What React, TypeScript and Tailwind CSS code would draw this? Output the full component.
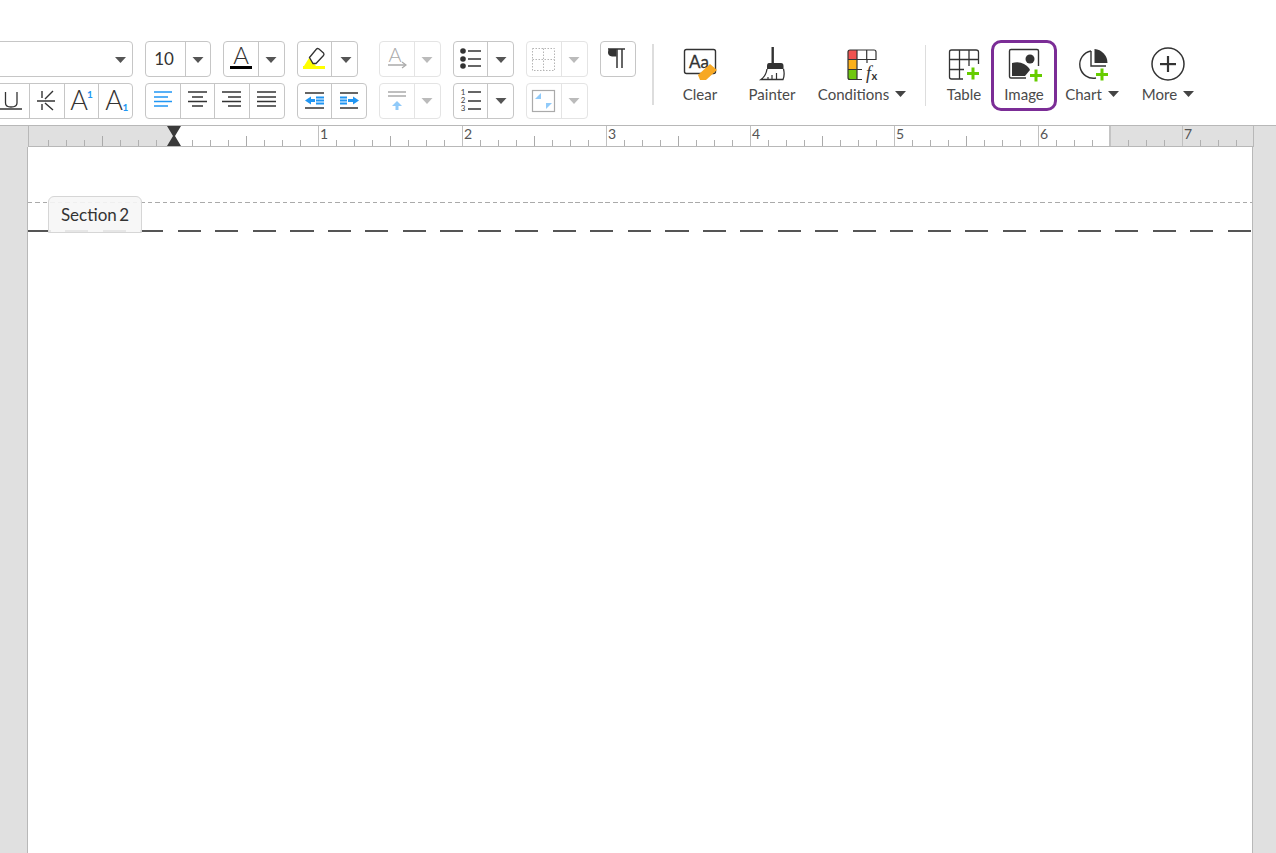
import React from "react";

const DARK = "#333333";
const BLUE = "#2196f3";
const GREEN = "#66cc00";

function Caret({ cx, cy, disabled }: { cx: number; cy: number; disabled?: boolean }) {
  return <polygon points={`${cx - 5.5},${cy - 3} ${cx + 5.5},${cy - 3} ${cx},${cy + 3}`} fill={disabled ? "#bbbbbb" : "#555555"} />;
}

function Group({ w, disabled, children }: { w: string; disabled?: boolean; children: React.ReactNode }) {
  return (
    <div className={`flex h-[36px] shrink-0 overflow-hidden rounded-[4px] border bg-white ${w} ${disabled ? "border-[#e4e4e4]" : "border-[#c6c6c6]"}`}>
      {children}
    </div>
  );
}

function Cell({ w, vb, div, disabled, children }: { w: string; vb: string; div?: boolean; disabled?: boolean; children?: React.ReactNode }) {
  return (
    <div className={`h-full shrink-0 ${w} ${div ? (disabled ? "border-l border-[#e4e4e4]" : "border-l border-[#c6c6c6]") : ""}`}>
      <svg className="block h-full w-full overflow-visible" viewBox={vb} preserveAspectRatio="xMinYMin meet">
        {children}
      </svg>
    </div>
  );
}

function L({ x1, x2, y, c = DARK, h = 1.6 }: { x1: number; x2: number; y: number; c?: string; h?: number }) {
  return <line x1={x1} x2={x2} y1={y} y2={y} stroke={c} strokeWidth={h} />;
}

function Plus({ cx, cy }: { cx: number; cy: number }) {
  return (
    <g fill={GREEN}>
      <rect x={cx - 6} y={cy - 1.5} width="12" height="3" />
      <rect x={cx - 1.5} y={cy - 6} width="3" height="12" />
    </g>
  );
}

function BigButton({ w, label, vb, caret, active, children, ml }: { w: string; label: string; vb: string; caret?: boolean; active?: boolean; ml: string; children: React.ReactNode }) {
  return (
    <div className={`flex h-[71px] shrink-0 flex-col items-center rounded-[10px] border-[3px] pt-[4px] ${w} ${ml} ${active ? "border-[#7b2d96]" : "border-transparent"}`}>
      <svg className="block h-[34px] w-[40px] shrink-0 overflow-visible" viewBox={vb}>
        {children}
      </svg>
      <div className="mt-[4px] flex h-[18px] items-center gap-[6px] whitespace-nowrap text-[15px] leading-[18px] text-[#4a4a4a]">
        <span>{label}</span>
        {caret && (
          <svg className="block h-[6px] w-[11px]" viewBox="0 0 11 6">
            <polygon points="0,0 11,0 5.5,6" fill="#444444" />
          </svg>
        )}
      </div>
    </div>
  );
}

function Toolbar() {
  return (
    <div className="flex h-[126px] w-full shrink-0 overflow-hidden border-b border-[#b8b8b8] bg-white pt-[41px]">
      <div className="ml-[-100px] flex shrink-0 flex-col gap-[6px]">
        <div className="flex items-start">
          <Group w="w-[233px]">
            <Cell w="w-[231px]" vb="-99 42 231 34">
              <Caret cx={120.5} cy={60} />
            </Cell>
          </Group>
          <div className="ml-[12px]">
            <Group w="w-[66px]">
              <div className="flex h-full w-[39px] shrink-0 items-center justify-center pr-[3px] text-[17px] text-[#333333]">10</div>
              <Cell w="w-[25px]" vb="186 42 24 34" div>
                <Caret cx={198} cy={60} />
              </Cell>
            </Group>
          </div>
          <div className="ml-[12px]">
            <Group w="w-[62px]">
              <Cell w="w-[34px]" vb="224 42 34 34">
                <text x="241" y="64" textAnchor="middle" fontSize="24" fontWeight="300" fill="#333333">A</text>
                <rect x="230" y="66" width="22" height="3" fill="#000" />
              </Cell>
              <Cell w="w-[26px]" vb="259 42 25 34" div>
                <Caret cx={271} cy={60} />
              </Cell>
            </Group>
          </div>
          <div className="ml-[12px]">
            <Group w="w-[61px]">
              <Cell w="w-[33px]" vb="298 42 33 34">
                <polygon points="304,66 309,58 316,66" fill="#ffff00" />
                <path d="M309.5 57.5 L316.5 49 Q317.5 48 319 49 L323.5 53 Q324.5 54.2 323.5 55.5 L316 63.5 L313 63.5 Z" fill="#fff" stroke="#333" strokeWidth="1.3" />
                <rect x="303" y="66" width="22" height="3" fill="#ffff00" />
              </Cell>
              <Cell w="w-[26px]" vb="332 42 25 34" div>
                <Caret cx={346} cy={60} />
              </Cell>
            </Group>
          </div>
          <div className="ml-[21px]">
            <Group w="w-[62px]" disabled>
              <Cell w="w-[34px]" vb="380 42 34 34">
                <text x="395" y="62" textAnchor="middle" fontSize="20" fontWeight="300" fill="#aaaaaa">A</text>
                <L x1={388} x2={405} y={65} c="#aaaaaa" />
                <path d="M402 62 L406 65 L402 68" fill="none" stroke="#aaaaaa" strokeWidth="1.2" />
              </Cell>
              <Cell w="w-[26px]" vb="415 42 25 34" div disabled>
                <Caret cx={427} cy={60} disabled />
              </Cell>
            </Group>
          </div>
          <div className="ml-[12px]">
            <Group w="w-[61px]">
              <Cell w="w-[33px]" vb="454 42 33 34">
                <circle cx="463" cy="51" r="2.8" fill={DARK} />
                <circle cx="463" cy="59" r="2.8" fill={DARK} />
                <circle cx="463" cy="66" r="2.8" fill={DARK} />
                <L x1={468} x2={481} y={51} />
                <L x1={468} x2={481} y={59} />
                <L x1={468} x2={481} y={66} />
              </Cell>
              <Cell w="w-[26px]" vb="488 42 25 34" div>
                <Caret cx={501} cy={60} />
              </Cell>
            </Group>
          </div>
          <div className="ml-[12px]">
            <Group w="w-[62px]" disabled>
              <Cell w="w-[34px]" vb="527 42 34 34">
                <g fill="none" stroke="#b5b5b5" strokeWidth="1" strokeDasharray="1.5 1.5">
                  <rect x="532.5" y="48.5" width="22" height="22" />
                  <path d="M543.5 48.5 V70.5 M532.5 59.5 H554.5" />
                </g>
              </Cell>
              <Cell w="w-[26px]" vb="562 42 25 34" div disabled>
                <Caret cx={574} cy={60} disabled />
              </Cell>
            </Group>
          </div>
          <div className="ml-[12px]">
            <Group w="w-[36px]">
              <Cell w="w-[34px]" vb="601 42 34 34">
                <path d="M616.5 49 H609.5 Q608 49 608 52.5 Q608 56 612 56.5 L616.5 56.5 Z" fill={DARK} />
                <path d="M608 49 H625" stroke={DARK} strokeWidth="1.4" />
                <path d="M617 49 V68 M622 49 V68" stroke={DARK} strokeWidth="1.5" />
              </Cell>
            </Group>
          </div>
        </div>
        <div className="flex items-start">
          <Group w="w-[233px]">
            <Cell w="w-[128px]" vb="-99 84 128 34">
              <path d="M5.5 92 V103 Q5.5 107 11 107 Q17 107 17 103 V92" fill="none" stroke="#333" strokeWidth="1.3" />
              <L x1={0} x2={22} y={109} h={1.3} />
            </Cell>
            <Cell w="w-[35px]" vb="30 84 34 34" div>
              <path d="M42 91 V98 M42 104 V110 M53 91 L45 99 M45 103 L53 110" fill="none" stroke="#333" strokeWidth="1.4" />
              <L x1={37} x2={55} y={101} h={1.4} />
            </Cell>
            <Cell w="w-[34px]" vb="64 84 33 34" div>
              <text x="78" y="110" textAnchor="middle" fontSize="27" fontWeight="300" fill="#333">A</text>
              <text x="89" y="98" textAnchor="middle" fontSize="10" fontWeight="700" fill={BLUE}>1</text>
            </Cell>
            <Cell w="w-[35px]" vb="98 84 34 34" div>
              <text x="113" y="110" textAnchor="middle" fontSize="27" fontWeight="300" fill="#333">A</text>
              <text x="124.5" y="111" textAnchor="middle" fontSize="10" fontWeight="700" fill={BLUE}>1</text>
            </Cell>
          </Group>
          <div className="ml-[12px]">
            <Group w="w-[140px]">
              <Cell w="w-[34px]" vb="146 84 34 34">
                <L x1={154} x2={172} y={92} c={BLUE} />
                <L x1={154} x2={168} y={97} c={BLUE} />
                <L x1={154} x2={172} y={101.5} c={BLUE} />
                <L x1={154} x2={168} y={106} c={BLUE} />
              </Cell>
              <Cell w="w-[34px]" vb="181 84 33 34" div>
                <L x1={188} x2={207} y={92} />
                <L x1={192} x2={203} y={97} />
                <L x1={188} x2={207} y={101.5} />
                <L x1={192} x2={203} y={106} />
              </Cell>
              <Cell w="w-[35px]" vb="215 84 34 34" div>
                <L x1={222} x2={241} y={92} />
                <L x1={228} x2={241} y={97} />
                <L x1={222} x2={241} y={101.5} />
                <L x1={228} x2={241} y={106} />
              </Cell>
              <Cell w="w-[35px]" vb="250 84 34 34" div>
                <L x1={257} x2={276} y={92} />
                <L x1={257} x2={276} y={97} />
                <L x1={257} x2={276} y={101.5} />
                <L x1={257} x2={276} y={106} />
              </Cell>
            </Group>
          </div>
          <div className="ml-[12px]">
            <Group w="w-[70px]">
              <Cell w="w-[33px]" vb="298 84 33 34">
                <L x1={305} x2={324} y={93} />
                <L x1={305} x2={324} y={108} />
                <L x1={316} x2={324} y={97.5} c={BLUE} h={2} />
                <L x1={316} x2={324} y={100.5} c={BLUE} h={2} />
                <L x1={316} x2={324} y={103.5} c={BLUE} h={2} />
                <polygon points="305,100.5 311,96.5 311,104.5" fill={BLUE} />
                <rect x="310" y="99" width="5" height="3" fill={BLUE} />
              </Cell>
              <Cell w="w-[35px]" vb="332 84 34 34" div>
                <L x1={340} x2={358} y={93} />
                <L x1={340} x2={358} y={108} />
                <L x1={340} x2={347} y={97.5} c={BLUE} h={2} />
                <L x1={340} x2={347} y={100.5} c={BLUE} h={2} />
                <L x1={340} x2={347} y={103.5} c={BLUE} h={2} />
                <polygon points="359,100.5 353,96.5 353,104.5" fill={BLUE} />
                <rect x="348" y="99" width="5" height="3" fill={BLUE} />
              </Cell>
            </Group>
          </div>
          <div className="ml-[12px]">
            <Group w="w-[62px]" disabled>
              <Cell w="w-[34px]" vb="380 84 34 34">
                <L x1={388} x2={406} y={92} c="#aaaaaa" />
                <L x1={388} x2={406} y={96} c="#aaaaaa" />
                <polygon points="397,101 402,106 392,106" fill="#90caf9" />
                <rect x="395.5" y="105" width="3" height="5" fill="#90caf9" />
              </Cell>
              <Cell w="w-[26px]" vb="415 84 25 34" div disabled>
                <Caret cx={427} cy={101} disabled />
              </Cell>
            </Group>
          </div>
          <div className="ml-[12px]">
            <Group w="w-[61px]">
              <Cell w="w-[33px]" vb="454 84 33 34">
                <text x="463" y="95" textAnchor="middle" fontSize="8" fill="#444">1</text>
                <text x="463" y="103" textAnchor="middle" fontSize="8" fill="#444">2</text>
                <text x="463" y="111" textAnchor="middle" fontSize="8" fill="#444">3</text>
                <L x1={468} x2={481} y={92} />
                <L x1={468} x2={481} y={101} />
                <L x1={468} x2={481} y={109} />
              </Cell>
              <Cell w="w-[26px]" vb="488 84 25 34" div>
                <Caret cx={501} cy={101} />
              </Cell>
            </Group>
          </div>
          <div className="ml-[12px]">
            <Group w="w-[62px]" disabled>
              <Cell w="w-[34px]" vb="527 84 34 34">
                <rect x="532.5" y="90.5" width="22" height="21" fill="#fff" stroke="#aaaaaa" strokeWidth="1.2" />
                <polygon points="535,99 541,93 541,99" fill="#90caf9" />
                <polygon points="546,103 552,103 546,109" fill="#90caf9" />
              </Cell>
              <Cell w="w-[26px]" vb="562 84 25 34" div disabled>
                <Caret cx={574} cy={101} disabled />
              </Cell>
            </Group>
          </div>
        </div>
      </div>

      <div className="ml-[16px] mt-[3px] h-[61px] w-[2px] shrink-0 bg-[#dddddd]" />

      <div className="mt-[-1px] flex h-[71px] shrink-0 items-start">
        <BigButton w="w-[62px]" ml="ml-[15px]" label="Clear" vb="680 47 40 34">
          <rect x="684.5" y="49.5" width="31" height="24" rx="2" fill="#fff" stroke="#333" strokeWidth="1.4" />
          <text x="699" y="68" textAnchor="middle" fontSize="17" fill="#333" stroke="#333" strokeWidth="0.3">Aa</text>
          <polygon points="698,75 710,64 717,70 706,80 700,80" fill="#f7a823" />
        </BigButton>
        <BigButton w="w-[62px]" ml="ml-[10px]" label="Painter" vb="752 47 40 34">
          <rect x="771.5" y="47" width="2.4" height="16" fill="#333" />
          <path d="M767 66 Q767 63 769 63 H781 Q783.5 63 783.5 66 V70 H767 Z" fill="#333" />
          <path d="M767 69 Q766 76 761 79.5 H783 Q785 75 783.5 69" fill="#fff" stroke="#333" strokeWidth="1.3" />
          <path d="M772 79 V75 M776.5 79 V73 M768 79 V77" stroke="#333" strokeWidth="1.2" />
        </BigButton>
        <BigButton w="w-[100px]" ml="ml-[9px]" label="Conditions" caret vb="842 47 40 34">
          <rect x="848" y="50" width="9" height="9.5" fill="#ef5350" />
          <rect x="848" y="59.5" width="9" height="10" fill="#fbb01a" />
          <rect x="848" y="69.5" width="9" height="10" fill="#6fc70f" />
          <path d="M866.7 59 V50 M876 60 V52 Q876 50 874 50 H850 Q848 50 848 52 V77.5 Q848 79.5 850 79.5 H862 M848 59.5 H876 M848 69.5 H862 M857 50 V79.5" fill="none" stroke="#333" strokeWidth="1.2" />
          <path d="M867 59.5 V63" stroke="#333" strokeWidth="1.2" />
          <text x="866" y="79" fontSize="18" fontStyle="italic" fontFamily="'Liberation Serif', serif" fill="#333">f</text>
          <text x="871.5" y="80" fontSize="11" fontWeight="700" fill="#333">x</text>
        </BigButton>
        <div className="ml-[13px] mt-[5px] h-[61px] w-[1px] shrink-0 bg-[#dddddd]" />
        <BigButton w="w-[54px]" ml="ml-[11px]" label="Table" vb="944 47 40 34">
          <path d="M949.5 52 Q949.5 50 951.5 50 H976 Q978.5 50 978.5 52 V64 M949.5 52 V77 Q949.5 79 951.5 79 H963 M949.5 59.5 H978.5 M949.5 69.5 H964 M959.5 50 V79 M969 50 V66" fill="none" stroke="#333" strokeWidth="1.3" />
          <Plus cx={973} cy={73.5} />
        </BigButton>
        <BigButton w="w-[66px]" ml="ml-[0px]" label="Image" active vb="1003 47 40 34">
          <path d="M1025 78 H1010 Q1008.5 78 1008.5 76.5 V51 Q1008.5 49.5 1010 49.5 H1036 Q1037.5 49.5 1037.5 51 V66" fill="none" stroke="#333" strokeWidth="1.4" />
          <path d="M1011 76 V63 Q1018 61 1023 64 Q1028 67 1029 70 L1024 76 Z" fill="#333" />
          <circle cx="1029" cy="59" r="4.5" fill="#333" />
          <Plus cx={1035} cy={75.5} />
        </BigButton>
        <BigButton w="w-[70px]" ml="ml-[0px]" label="Chart" caret vb="1072 47 40 34">
          <path d="M1091 51 A13.5 13.5 0 1 0 1096 78" fill="none" stroke="#333" strokeWidth="1.4" />
          <path d="M1091 51 V66 H1106" fill="none" stroke="#333" strokeWidth="1.4" />
          <path d="M1094.5 49 A14 14 0 0 1 1107.5 63 H1094.5 Z" fill="#333" />
          <Plus cx={1102} cy={74.5} />
        </BigButton>
        <BigButton w="w-[70px]" ml="ml-[6px]" label="More" caret vb="1148 47 40 34">
          <circle cx="1168" cy="64" r="16" fill="none" stroke="#333" strokeWidth="1.5" />
          <rect x="1160" y="63" width="16" height="2.2" fill="#333" />
          <rect x="1166.9" y="56" width="2.2" height="16" fill="#333" />
        </BigButton>
      </div>
    </div>
  );
}

const rulerCells = Array.from({ length: 67 }, (_, i) => i);

function Ruler() {
  return (
    <div className="relative flex h-[21px] w-[1226px] shrink-0 border-x border-b border-[#b8b8b8] bg-[#e0e0e0]">
      <div className="h-full w-[2px] shrink-0" />
      {rulerCells.map((i) => {
        const x = 30 + 18 * i;
        const end = x + 18;
        const white = x >= 174 && end <= 1110;
        const inch = (end - 174) % 144 === 0 && end > 174;
        const tall = (end - 30) % 72 === 0;
        return (
          <div key={i} className={`flex h-full w-[18px] shrink-0 items-end justify-end ${white ? "bg-white" : ""}`}>
            {inch ? (
              <div className="h-full w-[1px] bg-[#c0c0c0]" />
            ) : end === 1110 ? (
              <div className="h-full w-[2px] bg-[#c4c4c4]" />
            ) : end === 174 ? null : (
              <div className={`w-[1px] ${tall ? "h-[10px] bg-[#aaaaaa]" : "h-[6px] bg-[#b0b0b0]"}`} />
            )}
          </div>
        );
      })}
      {[1, 2, 3, 4, 5, 6, 7].map((n) => (
        <span key={n} className="absolute top-[0px] text-[14px] leading-[16px] text-[#555555]" style={{ left: 145 + 144 * n + 2 }}>
          {n}
        </span>
      ))}
      <svg className="absolute left-[137px] top-[0px] block h-[20px] w-[16px]" viewBox="0 0 16 20">
        <polygon points="1,0 15,0 9,10 15,20 1,20 7,10" fill="#3a3a3a" />
      </svg>
    </div>
  );
}

export default function App() {
  return (
    <div className="flex h-[853px] w-[1276px] flex-col overflow-hidden bg-[#e0e0e0] font-['Lato',sans-serif]">
      <Toolbar />
      <div className="ml-[28px] flex shrink-0">
        <Ruler />
      </div>
      <div className="ml-[27px] flex min-h-0 w-[1226px] flex-1 flex-col border-x border-[#b8b8b8] bg-white pt-[55px]">
        <div className="relative h-[1px] w-full shrink-0 bg-[repeating-linear-gradient(to_right,#aaaaaa_0,#aaaaaa_4.5px,transparent_4.5px,transparent_7.5px)]">
          <div className="absolute left-[20px] top-[-6px] z-10 flex h-[37px] w-[94px] items-center justify-center rounded-t-[6px] border border-[#d6d6d6] bg-[#f6f6f6]/90 text-[17px] text-[#333333] [word-spacing:-2px]">
            Section 2
          </div>
        </div>
        <div className="mt-[27px] h-[2px] w-full shrink-0 bg-[repeating-linear-gradient(to_right,#555555_0,#555555_23px,transparent_23px,transparent_37.5px)]" />
      </div>
    </div>
  );
}
